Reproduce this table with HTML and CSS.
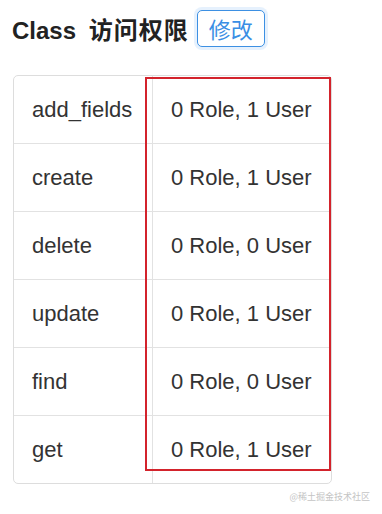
FILE: index.html
```html
<!DOCTYPE html>
<html lang="zh-CN">
<head>
<meta charset="utf-8">
<title>Class 访问权限</title>
<link rel="stylesheet" href="styles.css">
</head>
<body>
  <div class="page">
    <div class="header">
      <h2 class="title">Class <span class="title-cjk">访问权限</span></h2>
      <button class="edit-btn" type="button">修改</button>
    </div>

    <div class="perm-wrap">
      <table class="perm-table">
        <tbody>
          <tr><td class="op">add_fields</td><td class="count">0 Role, 1 User</td></tr>
          <tr><td class="op">create</td><td class="count">0 Role, 1 User</td></tr>
          <tr><td class="op">delete</td><td class="count">0 Role, 0 User</td></tr>
          <tr><td class="op">update</td><td class="count">0 Role, 1 User</td></tr>
          <tr><td class="op">find</td><td class="count">0 Role, 0 User</td></tr>
          <tr><td class="op">get</td><td class="count">0 Role, 1 User</td></tr>
        </tbody>
      </table>
      <div class="highlight"></div>
    </div>

    <div class="watermark">@稀土掘金技术社区</div>
  </div>
</body>
</html>
```

FILE: styles.css
```css
html, body {
  margin: 0;
  padding: 0;
  background: #ffffff;
}

.page {
  width: 382px;
  height: 514px;
  position: relative;
  font-family: "Liberation Sans", Arial, "Noto Sans CJK SC", sans-serif;
  color: #333333;
}

.header {
  display: flex;
  align-items: center;
  gap: 8px;
  padding: 10px 0 0 12px;
  height: 37px;
}

.title {
  margin: 0;
  font-size: 24px;
  font-weight: bold;
  color: #222222;
  line-height: 37px;
  word-spacing: 6px;
  position: relative;
  top: 1px;
}

.title-cjk {
  font-family: "Noto Sans CJK SC", sans-serif;
  letter-spacing: 1px;
}

.edit-btn {
  width: 68px;
  height: 37px;
  padding: 0;
  border: 1px solid #3d90e3;
  border-radius: 5px;
  background: #ffffff;
  color: #3a8ee4;
  font-family: "Noto Sans CJK SC", sans-serif;
  font-size: 22px;
  line-height: 35px;
  box-shadow: 0 0 0 3px rgba(64, 150, 240, 0.13);
}

.perm-wrap {
  position: relative;
  margin: 28px 0 0 13px;
  width: 319px;
}

.perm-table {
  width: 319px;
  border-collapse: separate;
  border-spacing: 0;
  border: 1px solid #dddddd;
  border-radius: 5px;
  font-size: 22px;
  color: #333333;
}

.perm-table td {
  height: 67px;
  padding: 0 18px;
  border-top: 1px solid #e2e2e2;
  white-space: nowrap;
  vertical-align: middle;
}

.perm-table tr:first-child td {
  border-top: none;
}

.perm-table td.op {
  width: 102px;
  border-right: 1px solid #e2e2e2;
}

/* red box drawn over the second column */
.highlight {
  position: absolute;
  left: 132px;
  top: 2px;
  width: 182px;
  height: 390px;
  border: 2px solid #d3232c;
  pointer-events: none;
}

.watermark {
  position: absolute;
  right: 12px;
  top: 491px;
  font-family: "Noto Sans CJK SC", sans-serif;
  font-size: 9px;
  line-height: 12px;
  color: #c4c4c4;
}
```
